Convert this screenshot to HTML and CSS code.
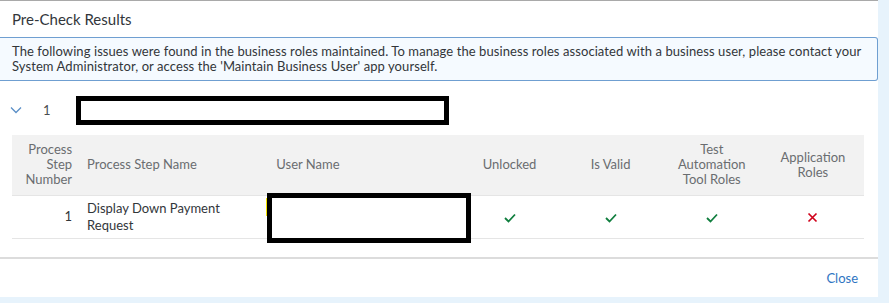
FILE: index.html
```html
<!DOCTYPE html>
<html lang="en">
<head>
  <meta charset="UTF-8">
  <title>Pre-Check Results</title>
  <link rel="stylesheet" href="styles.css">
</head>
<body>
  <div class="dialog">
    <header class="dialog-header">Pre-Check Results</header>

    <div class="message-strip">
      The following issues were found in the business roles maintained. To manage the business roles associated with a business user, please contact your System Administrator, or access the 'Maintain Business User' app yourself.
    </div>

    <div class="content">
      <div class="group-row">
        <svg class="chevron" width="12" height="8" viewBox="0 0 12 8">
          <path d="M1 1.5 L6 6.5 L11 1.5" fill="none" stroke="#5b8fc7" stroke-width="1.3"/>
        </svg>
        <span class="group-num">1</span>
        <div class="redact redact-title"></div>
      </div>

      <table class="results">
        <thead>
          <tr>
            <th class="col-num">Process<br>Step<br>Number</th>
            <th class="col-name">Process Step Name</th>
            <th class="col-user">User Name</th>
            <th class="col-flag">Unlocked</th>
            <th class="col-flag">Is Valid</th>
            <th class="col-flag">Test<br>Automation<br>Tool Roles</th>
            <th class="col-flag">Application<br>Roles</th>
          </tr>
        </thead>
        <tbody>
          <tr>
            <td class="col-num">1</td>
            <td class="col-name">Display Down Payment<br>Request</td>
            <td class="col-user"><span class="cursor"></span><div class="redact redact-user"></div></td>
            <td class="col-flag">
              <svg class="icon" width="12" height="10" viewBox="0 0 12 10"><path d="M1 5 L4.5 8.5 L11 1.5" fill="none" stroke="#107e3e" stroke-width="1.8"/></svg>
            </td>
            <td class="col-flag">
              <svg class="icon" width="12" height="10" viewBox="0 0 12 10"><path d="M1 5 L4.5 8.5 L11 1.5" fill="none" stroke="#107e3e" stroke-width="1.8"/></svg>
            </td>
            <td class="col-flag">
              <svg class="icon" width="12" height="10" viewBox="0 0 12 10"><path d="M1 5 L4.5 8.5 L11 1.5" fill="none" stroke="#107e3e" stroke-width="1.8"/></svg>
            </td>
            <td class="col-flag">
              <svg class="icon" width="11" height="11" viewBox="0 0 11 11"><path d="M1.5 1.5 L9.5 9.5 M9.5 1.5 L1.5 9.5" fill="none" stroke="#d0021b" stroke-width="1.7"/></svg>
            </td>
          </tr>
        </tbody>
      </table>
    </div>

    <footer class="dialog-footer">
      <button class="close-button">Close</button>
    </footer>
  </div>
</body>
</html>
```

FILE: styles.css
```css
body {
  margin: 0;
  background-color: #e7f3fc;
  font-family: Lato, "Liberation Sans", sans-serif;
  color: #32363a;
}
.dialog {
  width: 878px;
  height: 297px;
  background-color: #fff;
  border-top: 1px solid #a9a9a9;
  box-sizing: border-box;
  display: flex;
  flex-direction: column;
}
.dialog-header {
  height: 36px;
  padding-left: 12px;
  display: flex;
  align-items: center;
  font-size: 15px;
  color: #32363a;
}
.message-strip {
  border: 1px solid #6f9fd1;
  border-left: none;
  border-radius: 0 3px 3px 0;
  background-color: #f5faff;
  padding: 6px 12px;
  font-size: 13px;
  letter-spacing: 0.08px;
  line-height: 15px;
  color: #32363a;
}
.content {
  flex: 1;
  padding: 0 13px 0 12px;
}
.group-row {
  display: flex;
  align-items: center;
  height: 54px;
  padding-top: 4px;
  box-sizing: border-box;
}
.chevron {
  margin-left: -2px;
}
.group-num {
  font-size: 13px;
  color: #4a4d50;
  margin-left: 21px;
  width: 33px;
}
.redact {
  border: 5px solid #000;
  background-color: #fff;
  box-sizing: border-box;
}
.redact-title {
  width: 373px;
  height: 29px;
}
.results {
  width: 852px;
  border-collapse: collapse;
  font-size: 13px;
}
.results th {
  background-color: #f2f2f2;
  color: #6a6d70;
  font-weight: normal;
  line-height: 15px;
  height: 60px;
  padding: 0 8px 0 7px;
  border-bottom: 1px solid #e5e5e5;
  box-sizing: border-box;
}
.results td {
  height: 43px;
  line-height: 17px;
  padding: 0 8px 0 7px;
  border-bottom: 1px solid #e5e5e5;
  box-sizing: border-box;
}
.col-num {
  width: 68px;
  text-align: right;
}
.col-name {
  width: 188px;
  text-align: left;
}
.results .col-user {
  width: 191px;
  text-align: left;
  padding-left: 8px;
  position: relative;
}
.col-flag {
  width: 101px;
  text-align: center;
}
.icon {
  vertical-align: middle;
}
.cursor {
  position: absolute;
  left: -2px;
  top: 2px;
  width: 1px;
  height: 18px;
  background-color: #f5e400;
}
.redact-user {
  position: absolute;
  left: -1px;
  top: -3px;
  width: 204px;
  height: 50px;
}
.dialog-footer {
  height: 38px;
  border-top: 2px solid #dcdcdc;
  display: flex;
  justify-content: flex-end;
  align-items: center;
  padding-right: 20px;
}
.close-button {
  background: none;
  border: none;
  padding: 0;
  font-family: Lato, "Liberation Sans", sans-serif;
  font-size: 13px;
  color: #2e75c2;
  cursor: pointer;
}
```
